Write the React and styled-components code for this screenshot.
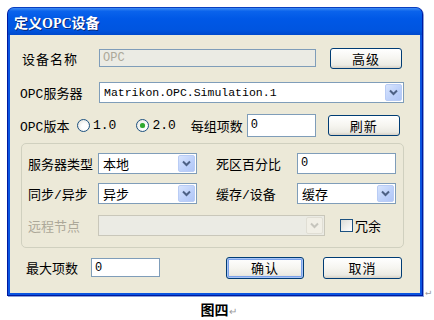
import styled, { createGlobalStyle } from "styled-components";

const Global = createGlobalStyle`
  html, body {
    margin: 0;
    background: #ffffff;
  }
  body {
    font-family: "Liberation Mono", "Noto Sans CJK SC", monospace;
    font-size: 13px;
    color: #000;
  }
`;

const Page = styled.div`
  width: 434px;
  height: 320px;
  padding: 7px 0 0 7px;
  box-sizing: border-box;
  position: relative;
`;

const Window = styled.div`
  width: 416px;
  height: 289px;
  box-sizing: border-box;
  display: flex;
  flex-direction: column;
  background: #0a54e0;
  border-radius: 7px 7px 0 0;
  border: 1px solid #0019a0;
  border-top-color: #0a3fbf;
  box-shadow: 1px 1px 0 #8aa0d8;
`;

const TitleBar = styled.div`
  height: 27px;
  display: flex;
  align-items: center;
  padding-left: 6px;
  border-radius: 6px 6px 0 0;
  background: linear-gradient(
    #3f8cf3 0%,
    #0a63ec 12%,
    #0058e6 40%,
    #0055e0 80%,
    #0049cc 100%
  );
  color: #ffffff;
  font-family: "Liberation Serif", "Noto Sans CJK SC", serif;
  font-weight: bold;
  font-size: 14px;
  text-shadow: 1px 1px 0 #0a2a7a;
`;

const Body = styled.div`
  flex: 1;
  margin: 0 2px 2px 2px;
  background: #ece9d8;
  padding: 12px 17px 0 10px;
  display: flex;
  flex-direction: column;
`;

const Row = styled.div`
  display: flex;
  align-items: center;
  height: ${(p) => p.$h || 22}px;
  margin-top: ${(p) => p.$mt || 0}px;
  padding-left: ${(p) => p.$pl || 0}px;
`;

const Label = styled.span`
  width: ${(p) => p.$w}px;
  flex: none;
  white-space: nowrap;
  color: ${(p) => (p.$disabled ? "#aca899" : "#000")};
  letter-spacing: ${(p) => p.$ls || 0}px;
`;

const TextInput = styled.div`
  width: ${(p) => p.$w}px;
  height: ${(p) => p.$h || 18}px;
  flex: none;
  box-sizing: border-box;
  border: 1px solid #7f9db9;
  background: ${(p) => (p.$disabled ? "#ebebe4" : "#ffffff")};
  color: ${(p) => (p.$disabled ? "#aca899" : "#000")};
  display: flex;
  align-items: center;
  padding-left: 3px;
  font-size: 12px;
  margin-left: ${(p) => p.$ml || 0}px;
`;

const Button = styled.div`
  width: ${(p) => p.$w}px;
  height: ${(p) => p.$h || 21}px;
  flex: none;
  box-sizing: border-box;
  margin-left: ${(p) => p.$ml || 0}px;
  border: 1px solid #003c74;
  border-radius: 3px;
  background: linear-gradient(#ffffff 0%, #f6f5f0 50%, #ebeae3 85%, #d6d0c5 100%);
  box-shadow: ${(p) =>
    p.$default
      ? "inset 0 0 0 1px #a9c4f5, inset 0 0 0 2px #7aa1ea"
      : "none"};
  display: flex;
  align-items: center;
  justify-content: center;
  font-family: "Noto Sans CJK SC", sans-serif;
  font-size: 13px;
  letter-spacing: 1px;
`;

const Combo = styled.div`
  width: ${(p) => p.$w}px;
  height: ${(p) => p.$h || 21}px;
  flex: none;
  box-sizing: border-box;
  border: 1px solid ${(p) => (p.$disabled ? "#c9c7ba" : "#7f9db9")};
  background: ${(p) => (p.$disabled ? "#ebebe4" : "#ffffff")};
  display: flex;
  align-items: center;
  margin-left: ${(p) => p.$ml || 0}px;
  padding: 1px;
`;

const ComboText = styled.span`
  flex: 1;
  padding-left: 3px;
  font-size: ${(p) => p.$fs || 13}px;
  white-space: nowrap;
  font-family: ${(p) =>
    p.$mono ? '"Liberation Mono", monospace' : '"Noto Sans CJK SC", sans-serif'};
`;

const Arrow = styled.span`
  width: 17px;
  height: 17px;
  flex: none;
  box-sizing: border-box;
  border: 1px solid ${(p) => (p.$disabled ? "#e0ded4" : "#b9ccf5")};
  border-radius: 2px;
  background: ${(p) =>
    p.$disabled
      ? "#f1efe6"
      : "linear-gradient(135deg, #d7e4fd 0%, #bcd0fa 60%, #b1c6f6 100%)"};
  display: flex;
  align-items: center;
  justify-content: center;
`;

const Group = styled.div`
  margin-top: 6px;
  margin-left: 1px;
  width: 383px;
  height: 105px;
  box-sizing: border-box;
  border: 1px solid #d0d0bf;
  border-radius: 5px;
  padding: 8px 0 0 6px;
  display: flex;
  flex-direction: column;
`;

const Radio = styled.span`
  width: 13px;
  height: 13px;
  box-sizing: border-box;
  border-radius: 50%;
  border: 1px solid #1c5180;
  background: radial-gradient(circle at 60% 60%, #ffffff 30%, #dcdcd5 100%);
  display: flex;
  align-items: center;
  justify-content: center;
  margin-left: ${(p) => p.$ml || 0}px;
  flex: none;
  &::after {
    content: "";
    width: 5px;
    height: 5px;
    border-radius: 50%;
    background: ${(p) => (p.$checked ? "#2fa82f" : "transparent")};
    box-shadow: ${(p) => (p.$checked ? "0 0 1px #7ed07e" : "none")};
  }
`;

const Check = styled.span`
  width: 13px;
  height: 13px;
  box-sizing: border-box;
  border: 1px solid #1c5180;
  background: linear-gradient(135deg, #dcdcd7 0%, #ffffff 100%);
  margin-left: ${(p) => p.$ml || 0}px;
  flex: none;
`;

const Plain = styled.span`
  margin-left: ${(p) => p.$ml || 0}px;
  white-space: nowrap;
  font-family: ${(p) =>
    p.$cjk ? '"Noto Sans CJK SC", sans-serif' : '"Liberation Mono", monospace'};
`;

const Caption = styled.div`
  display: flex;
  justify-content: center;
  align-items: baseline;
  margin-top: 3px;
  padding-right: 4px;
  font-family: "Noto Sans CJK SC", sans-serif;
  font-weight: bold;
  font-size: 14px;
`;

const ReturnMark = styled.span`
  color: #9a9a9a;
  font-size: 10px;
  font-weight: normal;
`;

const CornerMark = styled(ReturnMark)`
  position: absolute;
  left: 425px;
  top: 286px;
`;

const Chevron = ({ disabled }) => (
  <svg width="9" height="7" viewBox="0 0 9 7">
    <path
      d="M1 1.5 L4.5 5 L8 1.5"
      fill="none"
      stroke={disabled ? "#c6c5bd" : "#4d6185"}
      strokeWidth="2"
    />
  </svg>
);

const Select = ({ w, value, mono, fs, disabled, ml }) => (
  <Combo $w={w} $disabled={disabled} $ml={ml}>
    <ComboText $mono={mono} $fs={fs}>
      {value}
    </ComboText>
    <Arrow $disabled={disabled}>
      <Chevron disabled={disabled} />
    </Arrow>
  </Combo>
);

const App = () => {
  return (
    <>
      <Global />
      <Page>
        <Window>
          <TitleBar>定义OPC设备</TitleBar>
          <Body>
            <Row $h={22} $pl={2}>
              <Label $w={77} $ls={1}>设备名称</Label>
              <TextInput $w={217} $disabled>
                <Plain>OPC</Plain>
              </TextInput>
              <Button $w={72} $ml={14}>高级</Button>
            </Row>
            <Row $h={22} $mt={12}>
              <Label $w={79}>OPC服务器</Label>
              <Select
                w={305}
                value="Matrikon.OPC.Simulation.1"
                mono
                fs={11.5}
              />
            </Row>
            <Row $h={24} $mt={10}>
              <Label $w={57}>OPC版本</Label>
              <Radio />
              <Plain $ml={3}>1.0</Plain>
              <Radio $checked $ml={20} />
              <Plain $ml={3}>2.0</Plain>
              <Plain $cjk $ml={15}>每组项数</Plain>
              <TextInput $w={69} $h={23} $ml={4}>0</TextInput>
              <Button $w={72} $ml={12}>刷新</Button>
            </Row>
            <Group>
              <Row $h={22}>
                <Label $w={70}>服务器类型</Label>
                <Select w={99} value="本地" />
                <Label $w={81} style={{ marginLeft: 19 }}>
                  死区百分比
                </Label>
                <TextInput $w={99} $h={21}>0</TextInput>
              </Row>
              <Row $h={22} $mt={8}>
                <Label $w={70}>同步/异步</Label>
                <Select w={99} value="异步" />
                <Label $w={81} style={{ marginLeft: 19 }}>
                  缓存/设备
                </Label>
                <Select w={99} value="缓存" />
              </Row>
              <Row $h={22} $mt={10}>
                <Label $w={70} $disabled>远程节点</Label>
                <Select w={227} value="" disabled />
                <Check $ml={15} />
                <Plain $cjk $ml={2}>冗余</Plain>
              </Row>
            </Group>
            <Row $h={23} $mt={8} $pl={6}>
              <Label $w={65}>最大项数</Label>
              <TextInput $w={69} $h={19}>0</TextInput>
              <Button $w={78} $h={22} $ml={66} $default>确认</Button>
              <Button $w={79} $h={22} $ml={19}>取消</Button>
            </Row>
          </Body>
        </Window>
        <Caption>
          图四<ReturnMark>↵</ReturnMark>
        </Caption>
        <CornerMark>↵</CornerMark>
      </Page>
    </>
  );
};

export default App;
